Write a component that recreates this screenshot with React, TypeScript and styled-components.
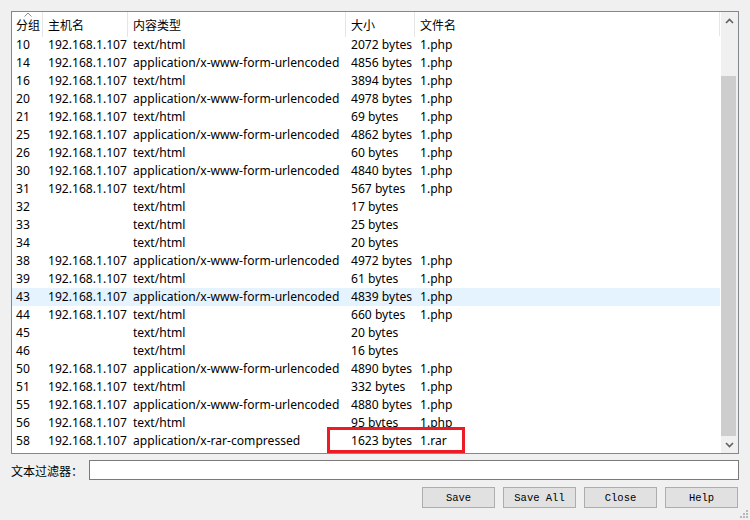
import React from 'react'
import styled, { createGlobalStyle } from 'styled-components'

const GlobalStyle = createGlobalStyle`
  html, body {
    margin: 0;
    padding: 0;
    background: #f0f0f0;
  }
  body {
    font-family: 'Noto Sans', 'Noto Sans CJK SC', sans-serif;
    font-size: 12px;
    color: #000;
  }
`

const COLS = '31px 85px 218px 69px 1fr'

const Window = styled.div`
  position: relative;
  width: 750px;
  height: 520px;
  box-sizing: border-box;
  padding: 11px 11px 0 11px;
  display: flex;
  flex-direction: column;
  background: #f0f0f0;
`

const Frame = styled.div`
  height: 443px;
  box-sizing: border-box;
  border: 1px solid #828790;
  background: #fff;
  display: flex;
`

const ListArea = styled.div`
  flex: 1;
  display: flex;
  flex-direction: column;
  overflow: hidden;
`

const HeaderRow = styled.div`
  position: relative;
  display: grid;
  grid-template-columns: ${COLS};
  height: 24px;
  border-right: 1px solid #e5e5e5;
`

const HeaderCell = styled.div<{ first?: boolean }>`
  position: relative;
  padding-left: ${(p) => (p.first ? 4 : 5)}px;
  line-height: 25px;
  font-family: 'Noto Sans CJK SC', sans-serif;
  font-size: 12px;
  white-space: nowrap;
  border-right: 1px solid #e5e5e5;
  &:last-child {
    border-right: none;
  }
`

const SortCaret = styled.svg`
  position: absolute;
  left: 12px;
  top: 0;
`

const Row = styled.div<{ selected?: boolean }>`
  display: grid;
  grid-template-columns: ${COLS};
  height: 18px;
  line-height: 18px;
  background: ${(p) => (p.selected ? '#e5f3ff' : 'transparent')};
`

const Cell = styled.div<{ first?: boolean }>`
  padding-left: ${(p) => (p.first ? 4 : 5)}px;
  white-space: nowrap;
  overflow: hidden;
  font-family: 'Noto Sans', sans-serif;
  font-size: 12.1px;
`

const ScrollBar = styled.div`
  width: 17px;
  display: flex;
  flex-direction: column;
  align-items: center;
  background: #f0f0f0;
  border-left: 1px solid #fff;
`

const ArrowBox = styled.div`
  height: 17px;
  width: 100%;
  display: flex;
  align-items: center;
  justify-content: center;
`

const Track = styled.div`
  flex: 1;
  width: 100%;
  display: flex;
  flex-direction: column;
  justify-content: flex-end;
`

const Thumb = styled.div`
  height: 360px;
  width: 15px;
  background: #cdcdcd;
`

const Highlight = styled.div`
  position: absolute;
  left: 327px;
  top: 427px;
  width: 138px;
  height: 26px;
  box-sizing: border-box;
  border: 3px solid #ed1c24;
  pointer-events: none;
`

const FilterRow = styled.div`
  display: flex;
  align-items: center;
  margin-top: 6px;
  height: 20px;
`

const FilterLabel = styled.label`
  width: 78px;
  font-family: 'Noto Sans CJK SC', sans-serif;
  font-size: 12px;
`

const FilterInput = styled.div`
  flex: 1;
  height: 20px;
  box-sizing: border-box;
  border: 1px solid #7a7a7a;
  background: #fff;
`

const ButtonRow = styled.div`
  display: flex;
  justify-content: flex-end;
  gap: 8px;
  margin-top: 7px;
  padding-right: 1px;
`

const Button = styled.button`
  width: 73px;
  height: 21px;
  box-sizing: border-box;
  border: 1px solid #adadad;
  background: #e1e1e1;
  font-family: 'Liberation Mono', monospace;
  font-size: 10.5px;
  color: #000;
  padding: 0;
`

const Grip = styled.svg`
  position: absolute;
  right: 2px;
  bottom: 2px;
`

type Obj = [string, string, string, string, string]

const HOST = '192.168.1.107'
const FORM = 'application/x-www-form-urlencoded'
const HTML = 'text/html'

const rows: Obj[] = [
  ['10', HOST, HTML, '2072 bytes', '1.php'],
  ['14', HOST, FORM, '4856 bytes', '1.php'],
  ['16', HOST, HTML, '3894 bytes', '1.php'],
  ['20', HOST, FORM, '4978 bytes', '1.php'],
  ['21', HOST, HTML, '69 bytes', '1.php'],
  ['25', HOST, FORM, '4862 bytes', '1.php'],
  ['26', HOST, HTML, '60 bytes', '1.php'],
  ['30', HOST, FORM, '4840 bytes', '1.php'],
  ['31', HOST, HTML, '567 bytes', '1.php'],
  ['32', '', HTML, '17 bytes', ''],
  ['33', '', HTML, '25 bytes', ''],
  ['34', '', HTML, '20 bytes', ''],
  ['38', HOST, FORM, '4972 bytes', '1.php'],
  ['39', HOST, HTML, '61 bytes', '1.php'],
  ['43', HOST, FORM, '4839 bytes', '1.php'],
  ['44', HOST, HTML, '660 bytes', '1.php'],
  ['45', '', HTML, '20 bytes', ''],
  ['46', '', HTML, '16 bytes', ''],
  ['50', HOST, FORM, '4890 bytes', '1.php'],
  ['51', HOST, HTML, '332 bytes', '1.php'],
  ['55', HOST, FORM, '4880 bytes', '1.php'],
  ['56', HOST, HTML, '95 bytes', '1.php'],
  ['58', HOST, 'application/x-rar-compressed', '1623 bytes', '1.rar'],
]

const headers = ['分组', '主机名', '内容类型', '大小', '文件名']

const Chevron = ({ up }: { up?: boolean }) => (
  <svg width="9" height="6" viewBox="0 0 9 6">
    <path
      d={up ? 'M1 5 L4.5 1.5 L8 5' : 'M1 1 L4.5 4.5 L8 1'}
      fill="none"
      stroke="#606060"
      strokeWidth="1.6"
    />
  </svg>
)

const App = () => {
  return (
    <Window>
      <GlobalStyle />
      <Frame>
        <ListArea>
          <HeaderRow>
            {headers.map((h, i) => (
              <HeaderCell key={h} first={i === 0}>
                {i === 0 && (
                  <SortCaret width="8" height="5" viewBox="0 0 8 5">
                    <path d="M0.5 4.5 L4 1 L7.5 4.5" fill="none" stroke="#8a8a8a" strokeWidth="1" />
                  </SortCaret>
                )}
                {h}
              </HeaderCell>
            ))}
          </HeaderRow>
          {rows.map((r) => (
            <Row key={r[0]} selected={r[0] === '43'}>
              {r.map((c, i) => (
                <Cell key={i} first={i === 0}>
                  {c}
                </Cell>
              ))}
            </Row>
          ))}
        </ListArea>
        <ScrollBar>
          <ArrowBox>
            <Chevron up />
          </ArrowBox>
          <Track>
            <Thumb />
          </Track>
          <ArrowBox>
            <Chevron />
          </ArrowBox>
        </ScrollBar>
      </Frame>
      <FilterRow>
        <FilterLabel>文本过滤器：</FilterLabel>
        <FilterInput />
      </FilterRow>
      <ButtonRow>
        <Button>Save</Button>
        <Button>Save All</Button>
        <Button>Close</Button>
        <Button>Help</Button>
      </ButtonRow>
      <Highlight />
      <Grip width="8" height="8" viewBox="0 0 8 8">
        {[
          [6, 0],
          [3, 3],
          [6, 3],
          [0, 6],
          [3, 6],
          [6, 6],
        ].map(([x, y]) => (
          <rect key={`${x}-${y}`} x={x} y={y} width="2" height="2" fill="#b8b8b8" />
        ))}
      </Grip>
    </Window>
  )
}

export default App
